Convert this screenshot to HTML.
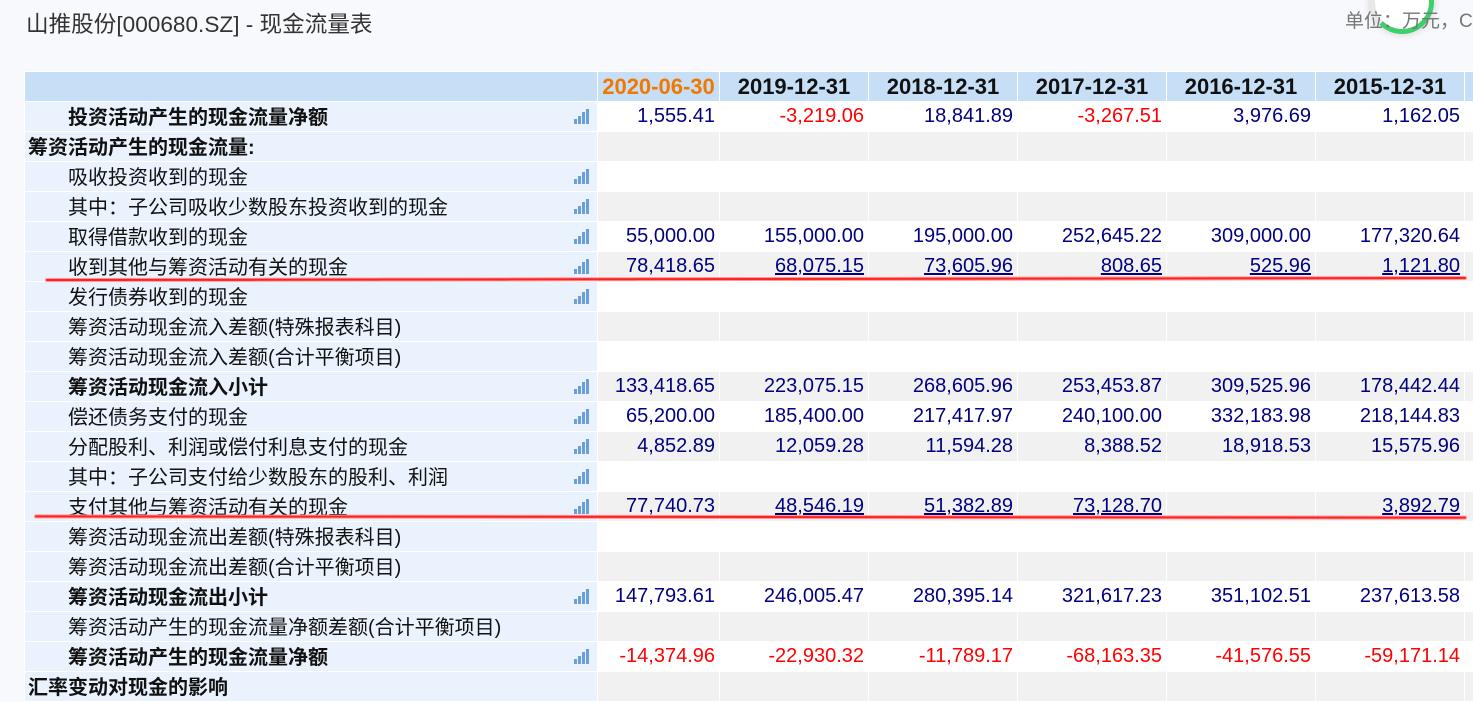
<!DOCTYPE html>
<html><head><meta charset="utf-8">
<style>
body{margin:0;width:1473px;height:678px;overflow:hidden;background:#f8f9fc;font-family:"Liberation Sans","Noto Sans CJK SC",sans-serif;position:relative}
.title{position:absolute;left:26px;top:6px;font-size:22.6px;color:#333}
.unit{position:absolute;left:1345px;top:6px;font-size:19px;color:#777;white-space:nowrap}
.circ{position:absolute;left:1370px;top:-30px;width:54px;height:54px;border-radius:50%;border:5px solid #3ccf6a;border-top-color:transparent;border-left-color:#e8e8e8;background:#fff;box-shadow:0 0 8px #ccc}
table{position:absolute;left:24px;top:71px;width:1460px;border-collapse:collapse;table-layout:fixed;font-size:20px}
tr{height:30px}
td{border:1px solid #fff;height:30px;box-sizing:border-box;padding:0;white-space:nowrap;overflow:hidden}
tr.h td{background:#c6dff7;font-weight:bold;text-align:center;color:#111;font-size:22px}
tr.h td.o{color:#f07800}
td.l{background:#eaf3fd;position:relative;color:#111;font-size:20px}
td.l span{position:absolute;left:43px;top:-1px}
td.l.b{font-weight:bold}
td.l.n span{left:3px}
td.n2{text-align:right;padding-right:4px;color:#000080}
tr.g td.n2{background:#f1f1f1}
tr.w td.n2{background:#fff}
.r{color:#f00!important}
.ic{position:absolute;left:549px;top:7px;width:16px;height:15px}
.ic i{position:absolute;bottom:0;width:3px;background:#6a9fdc}
.rl{position:absolute;height:2px;background:#f22;border:1px solid #f99;border-radius:2px}
</style></head><body>
<div class="title">山推股份[000680.SZ] - 现金流量表</div>
<div class="circ"></div>
<div class="unit">单位：万元，C</div>
<table>
<colgroup><col style="width:573px"><col style="width:122px"><col style="width:149px"><col style="width:149px"><col style="width:149px"><col style="width:149px"><col style="width:149px"><col style="width:20px"></colgroup>
<tr class="h"><td></td><td class="o">2020-06-30</td><td>2019-12-31</td><td>2018-12-31</td><td>2017-12-31</td><td>2016-12-31</td><td>2015-12-31</td><td></td></tr>
<tr class="w"><td class="l b"><span>投资活动产生的现金流量净额</span><div class="ic"><i style="left:0;height:5px"></i><i style="left:4px;height:8px"></i><i style="left:8px;height:12px"></i><i style="left:12px;height:15px"></i></div></td><td class="n2">1,555.41</td><td class="n2 r">-3,219.06</td><td class="n2">18,841.89</td><td class="n2 r">-3,267.51</td><td class="n2">3,976.69</td><td class="n2">1,162.05</td><td class="n2"></td></tr>
<tr class="g"><td class="l b n"><span>筹资活动产生的现金流量:</span></td><td class="n2"></td><td class="n2"></td><td class="n2"></td><td class="n2"></td><td class="n2"></td><td class="n2"></td><td class="n2"></td></tr>
<tr class="w"><td class="l"><span>吸收投资收到的现金</span><div class="ic"><i style="left:0;height:5px"></i><i style="left:4px;height:8px"></i><i style="left:8px;height:12px"></i><i style="left:12px;height:15px"></i></div></td><td class="n2"></td><td class="n2"></td><td class="n2"></td><td class="n2"></td><td class="n2"></td><td class="n2"></td><td class="n2"></td></tr>
<tr class="g"><td class="l"><span>其中：子公司吸收少数股东投资收到的现金</span><div class="ic"><i style="left:0;height:5px"></i><i style="left:4px;height:8px"></i><i style="left:8px;height:12px"></i><i style="left:12px;height:15px"></i></div></td><td class="n2"></td><td class="n2"></td><td class="n2"></td><td class="n2"></td><td class="n2"></td><td class="n2"></td><td class="n2"></td></tr>
<tr class="w"><td class="l"><span>取得借款收到的现金</span><div class="ic"><i style="left:0;height:5px"></i><i style="left:4px;height:8px"></i><i style="left:8px;height:12px"></i><i style="left:12px;height:15px"></i></div></td><td class="n2">55,000.00</td><td class="n2">155,000.00</td><td class="n2">195,000.00</td><td class="n2">252,645.22</td><td class="n2">309,000.00</td><td class="n2">177,320.64</td><td class="n2"></td></tr>
<tr class="g"><td class="l"><span>收到其他与筹资活动有关的现金</span><div class="ic"><i style="left:0;height:5px"></i><i style="left:4px;height:8px"></i><i style="left:8px;height:12px"></i><i style="left:12px;height:15px"></i></div></td><td class="n2">78,418.65</td><td class="n2"><u>68,075.15</u></td><td class="n2"><u>73,605.96</u></td><td class="n2"><u>808.65</u></td><td class="n2"><u>525.96</u></td><td class="n2"><u>1,121.80</u></td><td class="n2"></td></tr>
<tr class="w"><td class="l"><span>发行债券收到的现金</span><div class="ic"><i style="left:0;height:5px"></i><i style="left:4px;height:8px"></i><i style="left:8px;height:12px"></i><i style="left:12px;height:15px"></i></div></td><td class="n2"></td><td class="n2"></td><td class="n2"></td><td class="n2"></td><td class="n2"></td><td class="n2"></td><td class="n2"></td></tr>
<tr class="g"><td class="l"><span>筹资活动现金流入差额(特殊报表科目)</span></td><td class="n2"></td><td class="n2"></td><td class="n2"></td><td class="n2"></td><td class="n2"></td><td class="n2"></td><td class="n2"></td></tr>
<tr class="w"><td class="l"><span>筹资活动现金流入差额(合计平衡项目)</span></td><td class="n2"></td><td class="n2"></td><td class="n2"></td><td class="n2"></td><td class="n2"></td><td class="n2"></td><td class="n2"></td></tr>
<tr class="g"><td class="l b"><span>筹资活动现金流入小计</span><div class="ic"><i style="left:0;height:5px"></i><i style="left:4px;height:8px"></i><i style="left:8px;height:12px"></i><i style="left:12px;height:15px"></i></div></td><td class="n2">133,418.65</td><td class="n2">223,075.15</td><td class="n2">268,605.96</td><td class="n2">253,453.87</td><td class="n2">309,525.96</td><td class="n2">178,442.44</td><td class="n2"></td></tr>
<tr class="w"><td class="l"><span>偿还债务支付的现金</span><div class="ic"><i style="left:0;height:5px"></i><i style="left:4px;height:8px"></i><i style="left:8px;height:12px"></i><i style="left:12px;height:15px"></i></div></td><td class="n2">65,200.00</td><td class="n2">185,400.00</td><td class="n2">217,417.97</td><td class="n2">240,100.00</td><td class="n2">332,183.98</td><td class="n2">218,144.83</td><td class="n2"></td></tr>
<tr class="g"><td class="l"><span>分配股利、利润或偿付利息支付的现金</span><div class="ic"><i style="left:0;height:5px"></i><i style="left:4px;height:8px"></i><i style="left:8px;height:12px"></i><i style="left:12px;height:15px"></i></div></td><td class="n2">4,852.89</td><td class="n2">12,059.28</td><td class="n2">11,594.28</td><td class="n2">8,388.52</td><td class="n2">18,918.53</td><td class="n2">15,575.96</td><td class="n2"></td></tr>
<tr class="w"><td class="l"><span>其中：子公司支付给少数股东的股利、利润</span><div class="ic"><i style="left:0;height:5px"></i><i style="left:4px;height:8px"></i><i style="left:8px;height:12px"></i><i style="left:12px;height:15px"></i></div></td><td class="n2"></td><td class="n2"></td><td class="n2"></td><td class="n2"></td><td class="n2"></td><td class="n2"></td><td class="n2"></td></tr>
<tr class="g"><td class="l"><span>支付其他与筹资活动有关的现金</span><div class="ic"><i style="left:0;height:5px"></i><i style="left:4px;height:8px"></i><i style="left:8px;height:12px"></i><i style="left:12px;height:15px"></i></div></td><td class="n2">77,740.73</td><td class="n2"><u>48,546.19</u></td><td class="n2"><u>51,382.89</u></td><td class="n2"><u>73,128.70</u></td><td class="n2"></td><td class="n2"><u>3,892.79</u></td><td class="n2"></td></tr>
<tr class="w"><td class="l"><span>筹资活动现金流出差额(特殊报表科目)</span></td><td class="n2"></td><td class="n2"></td><td class="n2"></td><td class="n2"></td><td class="n2"></td><td class="n2"></td><td class="n2"></td></tr>
<tr class="g"><td class="l"><span>筹资活动现金流出差额(合计平衡项目)</span></td><td class="n2"></td><td class="n2"></td><td class="n2"></td><td class="n2"></td><td class="n2"></td><td class="n2"></td><td class="n2"></td></tr>
<tr class="w"><td class="l b"><span>筹资活动现金流出小计</span><div class="ic"><i style="left:0;height:5px"></i><i style="left:4px;height:8px"></i><i style="left:8px;height:12px"></i><i style="left:12px;height:15px"></i></div></td><td class="n2">147,793.61</td><td class="n2">246,005.47</td><td class="n2">280,395.14</td><td class="n2">321,617.23</td><td class="n2">351,102.51</td><td class="n2">237,613.58</td><td class="n2"></td></tr>
<tr class="g"><td class="l"><span>筹资活动产生的现金流量净额差额(合计平衡项目)</span></td><td class="n2"></td><td class="n2"></td><td class="n2"></td><td class="n2"></td><td class="n2"></td><td class="n2"></td><td class="n2"></td></tr>
<tr class="w"><td class="l b"><span>筹资活动产生的现金流量净额</span><div class="ic"><i style="left:0;height:5px"></i><i style="left:4px;height:8px"></i><i style="left:8px;height:12px"></i><i style="left:12px;height:15px"></i></div></td><td class="n2 r">-14,374.96</td><td class="n2 r">-22,930.32</td><td class="n2 r">-11,789.17</td><td class="n2 r">-68,163.35</td><td class="n2 r">-41,576.55</td><td class="n2 r">-59,171.14</td><td class="n2"></td></tr>
<tr class="g"><td class="l b n"><span>汇率变动对现金的影响</span></td><td class="n2"></td><td class="n2"></td><td class="n2"></td><td class="n2"></td><td class="n2"></td><td class="n2"></td><td class="n2"></td></tr>
</table>
<div class="rl" style="left:45px;top:277px;width:1420px;transform:rotate(-0.08deg)"></div>
<div class="rl" style="left:34px;top:515px;width:1431px;transform:rotate(0.05deg)"></div>
</body></html>
